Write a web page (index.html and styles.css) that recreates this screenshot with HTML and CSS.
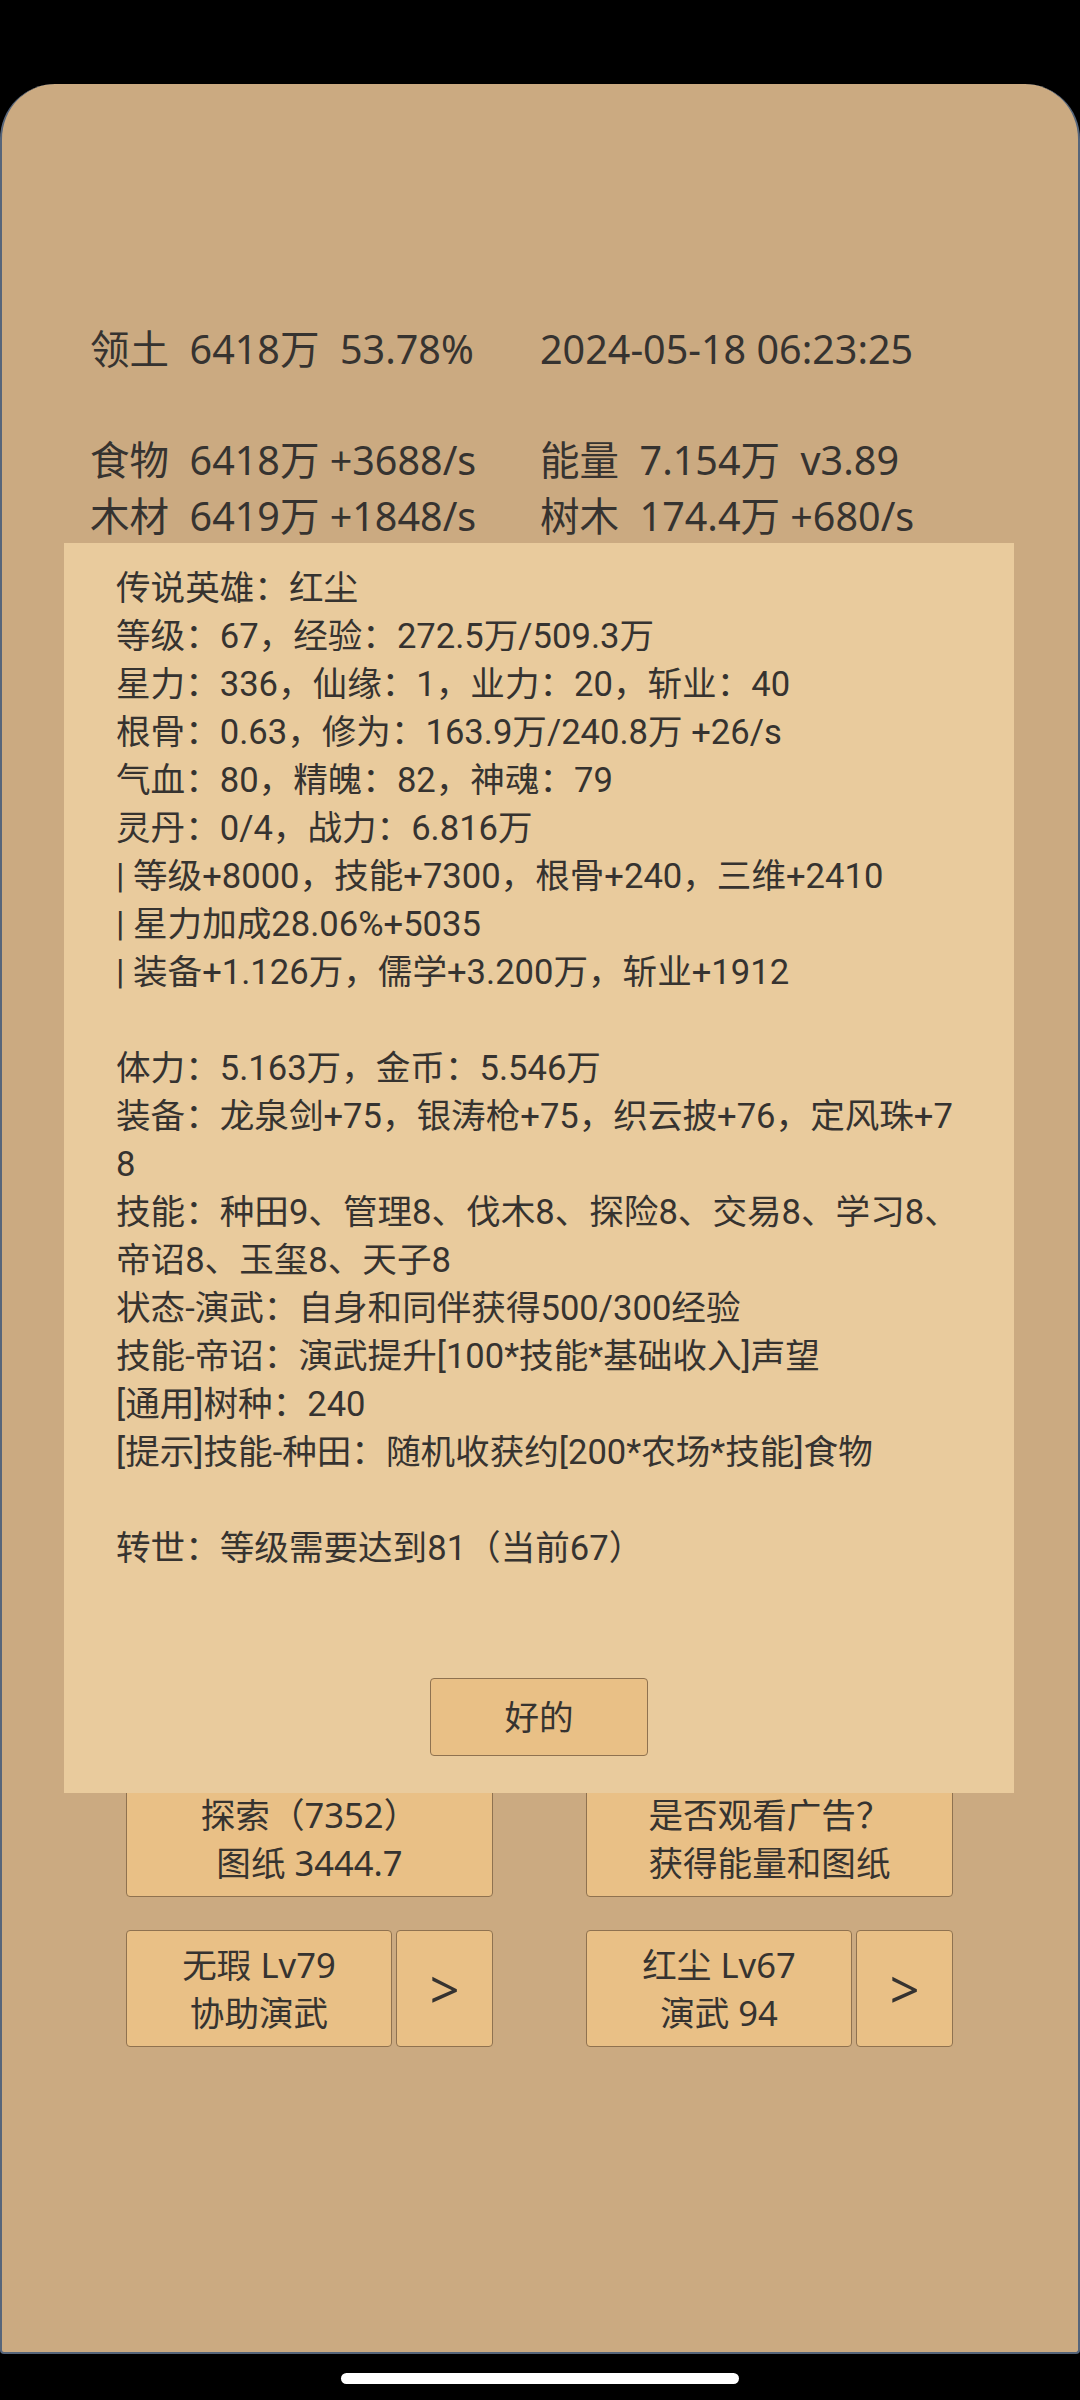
FILE: index.html
```html
<!DOCTYPE html>
<html lang="zh-CN">
<head>
<meta charset="utf-8">
<title>领土</title>
<link rel="stylesheet" href="styles.css">
</head>
<body>
<div class="statusbar"></div>
<div class="card">
  <div class="stats">
    <div class="cell">领土  6418万  53.78%</div>
    <div class="cell">2024-05-18 06:23:25</div>
    <div class="cell"> </div>
    <div class="cell"> </div>
    <div class="cell">食物  6418万 +3688/s</div>
    <div class="cell">能量  7.154万  v3.89</div>
    <div class="cell">木材  6419万 +1848/s</div>
    <div class="cell">树木  174.4万 +680/s</div>
  </div>

  <div class="actions">
    <button class="btn">探索（7352）<br>图纸 3444.7</button>
    <button class="btn">是否观看广告？<br>获得能量和图纸</button>
    <div class="pair">
      <button class="btn">无瑕 Lv79<br>协助演武</button>
      <button class="btn arrow">&gt;</button>
    </div>
    <div class="pair">
      <button class="btn">红尘 Lv67<br>演武 94</button>
      <button class="btn arrow">&gt;</button>
    </div>
  </div>

  <div class="dialog">
    <div class="dialog-text">
      <div class="line">传说英雄：红尘</div>
      <div class="line">等级：67，经验：272.5万/509.3万</div>
      <div class="line">星力：336，仙缘：1，业力：20，斩业：40</div>
      <div class="line">根骨：0.63，修为：163.9万/240.8万 +26/s</div>
      <div class="line">气血：80，精魄：82，神魂：79</div>
      <div class="line">灵丹：0/4，战力：6.816万</div>
      <div class="line">| 等级+8000，技能+7300，根骨+240，三维+2410</div>
      <div class="line">| 星力加成28.06%+5035</div>
      <div class="line">| 装备+1.126万，儒学+3.200万，斩业+1912</div>
      <div class="line"> </div>
      <div class="line">体力：5.163万，金币：5.546万</div>
      <div class="line">装备：龙泉剑+75，银涛枪+75，织云披+76，定风珠+7</div>
      <div class="line">8</div>
      <div class="line">技能：种田9、管理8、伐木8、探险8、交易8、学习8、</div>
      <div class="line">帝诏8、玉玺8、天子8</div>
      <div class="line">状态-演武：自身和同伴获得500/300经验</div>
      <div class="line">技能-帝诏：演武提升[100*技能*基础收入]声望</div>
      <div class="line">[通用]树种：240</div>
      <div class="line">[提示]技能-种田：随机收获约[200*农场*技能]食物</div>
      <div class="line"> </div>
      <div class="line">转世：等级需要达到81（当前67）</div>
    </div>
    <button class="btn ok">好的</button>
  </div>
</div>
<div class="navbar"><div class="pill"></div></div>
</body>
</html>
```

FILE: styles.css
```css
* { box-sizing: border-box; }

html, body {
  margin: 0;
  padding: 0;
  background: #000;
}

body {
  width: 1080px;
  height: 2400px;
  overflow: hidden;
  font-family: "Noto Sans", "Noto Sans CJK SC", sans-serif;
  color: #363330;
}

.statusbar {
  height: 84px;
}

.card {
  position: relative;
  height: 2270px;
  background: #cbaa81;
  border: 2px solid #56657a;
  border-top: none;
  border-radius: 55px 55px 4px 4px;
  padding: 238px 0 0 88px;
}

.stats {
  display: grid;
  grid-template-columns: 450px 1fr;
  font-size: 39.5px;
  line-height: 55.5px;
}

.cell {
  white-space: pre;
  height: 55.5px;
}

.actions {
  margin-top: 1236px;
  margin-left: 36px;
  display: grid;
  grid-template-columns: 367px 367px;
  column-gap: 93px;
  row-gap: 33px;
}

.btn {
  font-family: "Noto Sans", "Noto Sans CJK SC", sans-serif;
  font-size: 34.6px;
  line-height: 48px;
  color: #363330;
  background: #e9c086;
  border: 1.5px solid #8f7250;
  border-radius: 4px;
  height: 117px;
  padding: 0;
  text-align: center;
}

.pair {
  display: flex;
  gap: 4px;
}

.pair .btn:first-child {
  flex: 1;
}

.pair .arrow {
  width: 97px;
  font-size: 52px;
  line-height: 1;
}

.dialog {
  position: absolute;
  left: 62px;
  top: 459px;
  width: 950px;
  background: #e9cb9d;
  padding: 21px 50px 37px 52px;
  display: flex;
  flex-direction: column;
}

.dialog-text {
  font-family: Roboto, "Noto Sans CJK SC", sans-serif;
  font-size: 34.6px;
  line-height: 48px;
}

.line {
  white-space: pre;
  height: 48px;
}

.ok {
  align-self: center;
  margin-top: 106px;
  margin-right: 2px;
  width: 218px;
  height: 78px;
}

.navbar {
  height: 46px;
  display: flex;
  justify-content: center;
  padding-top: 19px;
}

.pill {
  width: 398px;
  height: 11px;
  border-radius: 6px;
  background: #fff;
}
```
